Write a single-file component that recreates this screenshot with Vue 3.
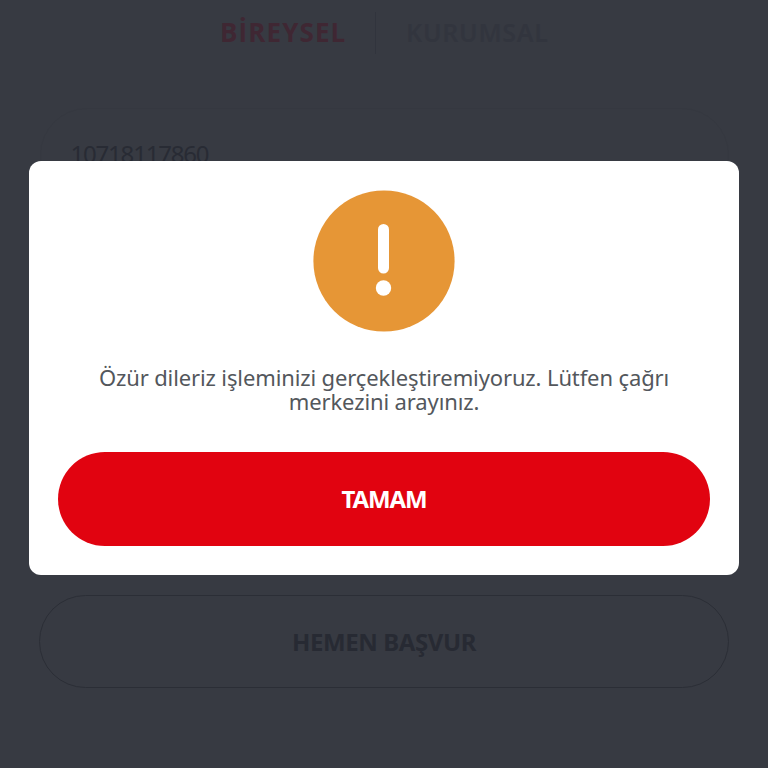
<script setup>
import { ref } from 'vue'

const identity = ref('10718117860')
const open = ref(true)
</script>

<template>
  <div class="screen">
    <main class="login">
      <nav class="tabs">
        <a class="tab active">BİREYSEL</a>
        <span class="divider"></span>
        <a class="tab inactive">KURUMSAL</a>
      </nav>
      <div class="field"><span class="value">{{ identity }}</span></div>
      <button class="apply">HEMEN BAŞVUR</button>
    </main>
    <div v-if="open" class="overlay">
      <section class="dialog" role="alertdialog">
        <svg class="icon" viewBox="0 0 142 142">
          <circle cx="71" cy="71" r="70.6" fill="#e69636" />
          <rect x="65" y="34" width="11" height="49.5" rx="5.5" fill="#fff" />
          <circle cx="70.5" cy="98" r="7.7" fill="#fff" />
        </svg>
        <p class="message">Özür dileriz işleminizi gerçekleştiremiyoruz. Lütfen çağrı merkezini arayınız.</p>
        <button class="confirm" @click="open = false">TAMAM</button>
      </section>
    </div>
  </div>
</template>

<style>
body {
  margin: 0;
  background: #373a42;
}
</style>

<style scoped>
.screen {
  position: relative;
  box-sizing: border-box;
  width: 768px;
  height: 768px;
  overflow: hidden;
  background: #373a42;
  font-family: "Noto Sans", "Open Sans", sans-serif;
}
.login {
  display: flex;
  flex-direction: column;
  align-items: center;
  padding-top: 11px;
}
.tabs {
  display: flex;
  align-items: center;
  width: 328px;
  height: 44px;
}
.tab {
  flex-shrink: 0;
  height: 44px;
  font-size: 26px;
  line-height: 42px;
  white-space: nowrap;
}
.active {
  width: 155px;
  color: #3f2733;
  font-family: "Open Sans", "Noto Sans", sans-serif;
  font-weight: 700;
  letter-spacing: 1.1px;
}
.divider {
  flex-shrink: 0;
  width: 1px;
  height: 42px;
  margin-right: 30px;
  background: #31343d;
}
.inactive {
  color: #32353e;
  font-size: 25px;
  font-weight: 600;
  letter-spacing: 0.7px;
}
.field {
  box-sizing: border-box;
  width: 689px;
  height: 94px;
  margin-top: 53px;
  padding: 0 30px;
  border: 1px solid #353840;
  border-radius: 47px;
  color: #282b34;
  font-size: 24px;
  letter-spacing: -1.2px;
  line-height: 90px;
}
.apply {
  box-sizing: border-box;
  width: 690px;
  height: 93px;
  margin-top: 393px;
  padding: 0;
  border: 1.5px solid #2b2e36;
  border-radius: 47px;
  background: transparent;
  color: #272a33;
  font: 700 24px/90px "Noto Sans", "Open Sans", sans-serif;
  letter-spacing: -0.4px;
}
.overlay {
  position: absolute;
  inset: 0;
  display: flex;
  align-items: flex-start;
  justify-content: center;
  padding-top: 161px;
}
.dialog {
  box-sizing: border-box;
  display: flex;
  flex-direction: column;
  align-items: center;
  width: 710px;
  height: 414px;
  padding: 29px 29px 0;
  border-radius: 12px;
  background: #fff;
}
.icon {
  display: block;
  width: 142px;
  height: 142px;
}
.message {
  width: 600px;
  height: 48px;
  margin: 33px 0 0;
  color: #53575c;
  font-size: 22px;
  letter-spacing: -0.12px;
  line-height: 24px;
  text-align: center;
}
.confirm {
  width: 652px;
  height: 94px;
  margin-top: 39px;
  padding: 0;
  border: 0;
  border-radius: 47px;
  background: #e10310;
  color: #fff;
  font: 700 24px/94px "Noto Sans", "Open Sans", sans-serif;
  letter-spacing: -1.1px;
}
</style>
